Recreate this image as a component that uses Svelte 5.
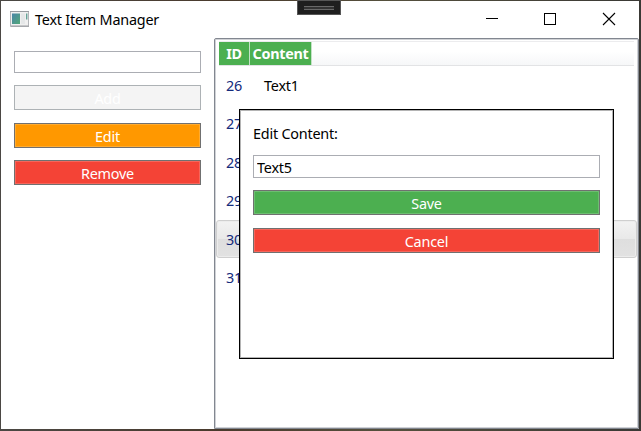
<script>
  const rows = [
    { id: 26, text: 'Text1' },
    { id: 27, text: '' },
    { id: 28, text: '' },
    { id: 29, text: '' },
    { id: 30, text: '' },
    { id: 31, text: '' }
  ];
  let selected = $state(30);
  let newText = $state('');
  let editText = $state('Text5');
</script>

<div class="desktop">
  <div class="window">
    <header>
      <svg class="app" width="19" height="16" viewBox="0 0 19 16">
        <defs>
          <linearGradient id="pic" x1="0" y1="0" x2="1" y2="1">
            <stop offset="0" stop-color="#4a85a8" />
            <stop offset="1" stop-color="#52a878" />
          </linearGradient>
        </defs>
        <rect x="0.5" y="0.5" width="18" height="14.5" fill="#f0f0f0" stroke="#b3b5b9" />
        <path d="M0 .5H19M.5 15.3H19" stroke="#999ca1" />
        <rect x="2" y="2.5" width="8" height="10.5" fill="url(#pic)" />
        <rect x="11" y="2.5" width="4" height="10.5" fill="#e5e7e8" />
        <rect x="16" y="2.5" width="1.4" height="6" fill="#66a398" />
      </svg>
      <span class="title">Text Item Manager</span>
      <svg class="controls" width="130" height="14" viewBox="0 0 130 14" fill="none" stroke="#000">
        <path d="M0 6.5H12" />
        <rect x="58.5" y="1.5" width="11" height="11" />
        <path d="M117 1L129 13M129 1L117 13" stroke-width="1.1" />
      </svg>
    </header>
    <main>
      <aside>
        <input class="field new" bind:value={newText} />
        <button class="add" disabled><span>Add</span></button>
        <button class="edit"><span>Edit</span></button>
        <button class="remove"><span>Remove</span></button>
      </aside>
      <section class="list">
        <div class="head">
          <b class="c1"><span>ID</span></b>
          <b class="c2"><span>Content</span></b>
        </div>
        {#each rows as row}
          <div class="row" class:selected={row.id === selected}>
            <span class="id">{row.id}</span><span>{row.text}</span>
          </div>
        {/each}
      </section>
    </main>
  </div>
  <div class="grip"><i></i></div>
  <div class="dialog">
    <label for="content">Edit Content:</label>
    <input id="content" class="field" bind:value={editText} />
    <button class="save"><span>Save</span></button>
    <button class="remove"><span>Cancel</span></button>
  </div>
</div>

<style>
  :global(body) { margin: 0; overflow: hidden; }
  * { box-sizing: border-box; }
  .desktop {
    position: relative;
    width: 641px;
    height: 431px;
    padding: 1px 2px 2px 1px;
    background: linear-gradient(90deg, #4b4844, #4a3a2c 35%, #55503d 60%, #3a3935);
    font: 14.4px/20px "Noto Sans", "Open Sans", sans-serif;
    letter-spacing: -0.22px;
    color: #000;
  }
  .window { height: 428px; background: #fff; display: flex; flex-direction: column; }
  header { height: 37px; display: flex; align-items: center; flex: none; padding: 0 23px 0 9px; }
  .app { margin-top: -1px; }
  .title { margin-left: 6px; }
  .controls { margin-left: auto; margin-top: -1px; }
  main { flex: 1; display: flex; min-height: 0; }
  aside { width: 213px; padding: 13px 13px 0; display: flex; flex-direction: column; }
  .field {
    font: inherit;
    letter-spacing: inherit;
    color: #000;
    background: #fff;
    border: 1px solid #abadb3;
    border-radius: 0;
    outline: none;
    width: 100%;
    height: 23px;
    padding: 1px 3px 0;
    margin: 0;
    flex: none;
  }
  .new { height: 22px; }
  button {
    font: inherit;
    letter-spacing: inherit;
    width: 100%;
    height: 25px;
    flex: none;
    margin: 12px 0 0;
    padding: 2px 0 0;
    border: 1px solid #707070;
    border-radius: 0;
    color: #fff;
    display: flex;
    align-items: center;
    justify-content: center;
    box-shadow: inset 0 0 0 1px #ffffff30;
  }
  .add { background: #f4f4f4; border-color: #adb2b5; box-shadow: none; }
  .edit { background: #ff9800; margin-top: 13px; }
  .remove { background: #f44336; }
  .save { background: #4caf50; }
  .list {
    width: 425px;
    border: 1px solid #828790;
    border-radius: 2px 2px 0 0;
    box-shadow: inset 0 0 0 1px #d0d2d6;
    padding: 2px 1px 0;
  }
  .head {
    height: 25px;
    margin: 0 3px;
    display: flex;
    border-top: 1px solid #ececee;
    border-bottom: 1px solid #e2e3e5;
    background: linear-gradient(#fff 40%, #f6f7f8);
    letter-spacing: -0.28px;
  }
  .head b {
    background: #4caf50;
    color: #fff;
    border-right: 1px solid #c4e2c6;
    display: flex;
    align-items: center;
    justify-content: center;
  }
  .c1 { width: 31px; }
  .c2 { width: 62px; }
  .row {
    height: 38px;
    margin-bottom: 0.6px;
    display: flex;
    align-items: center;
    padding: 1px 0 0 9px;
    border: 1px solid transparent;
  }
  .id { width: 38px; color: #142b7c; }
  .selected {
    border-color: #cfcfcf;
    border-radius: 3px;
    background: linear-gradient(#f2f2f2, #e9e9e9 49%, #dedede 50%, #e2e2e2);
    box-shadow: inset 0 0 0 1px #ececec;
  }
  .grip {
    position: absolute;
    left: 297px;
    top: 0;
    width: 44px;
    height: 15px;
    background: #1f1f1f;
    border: 1px solid #565656;
    padding: 5px 6px;
  }
  .grip i { display: block; height: 4px; border: solid #686868; border-width: 1px 0; background: #333; }
  .dialog {
    position: absolute;
    left: 239px;
    top: 109px;
    width: 375px;
    height: 250px;
    background: #fff;
    border: 1px solid #000;
    box-shadow: inset 0 0 0 1px #b4b4b4;
    padding: 14px 13px 0;
    display: flex;
    flex-direction: column;
  }
  label { height: 31px; flex: none; }
  .dialog .remove { margin-top: 13px; }
</style>
